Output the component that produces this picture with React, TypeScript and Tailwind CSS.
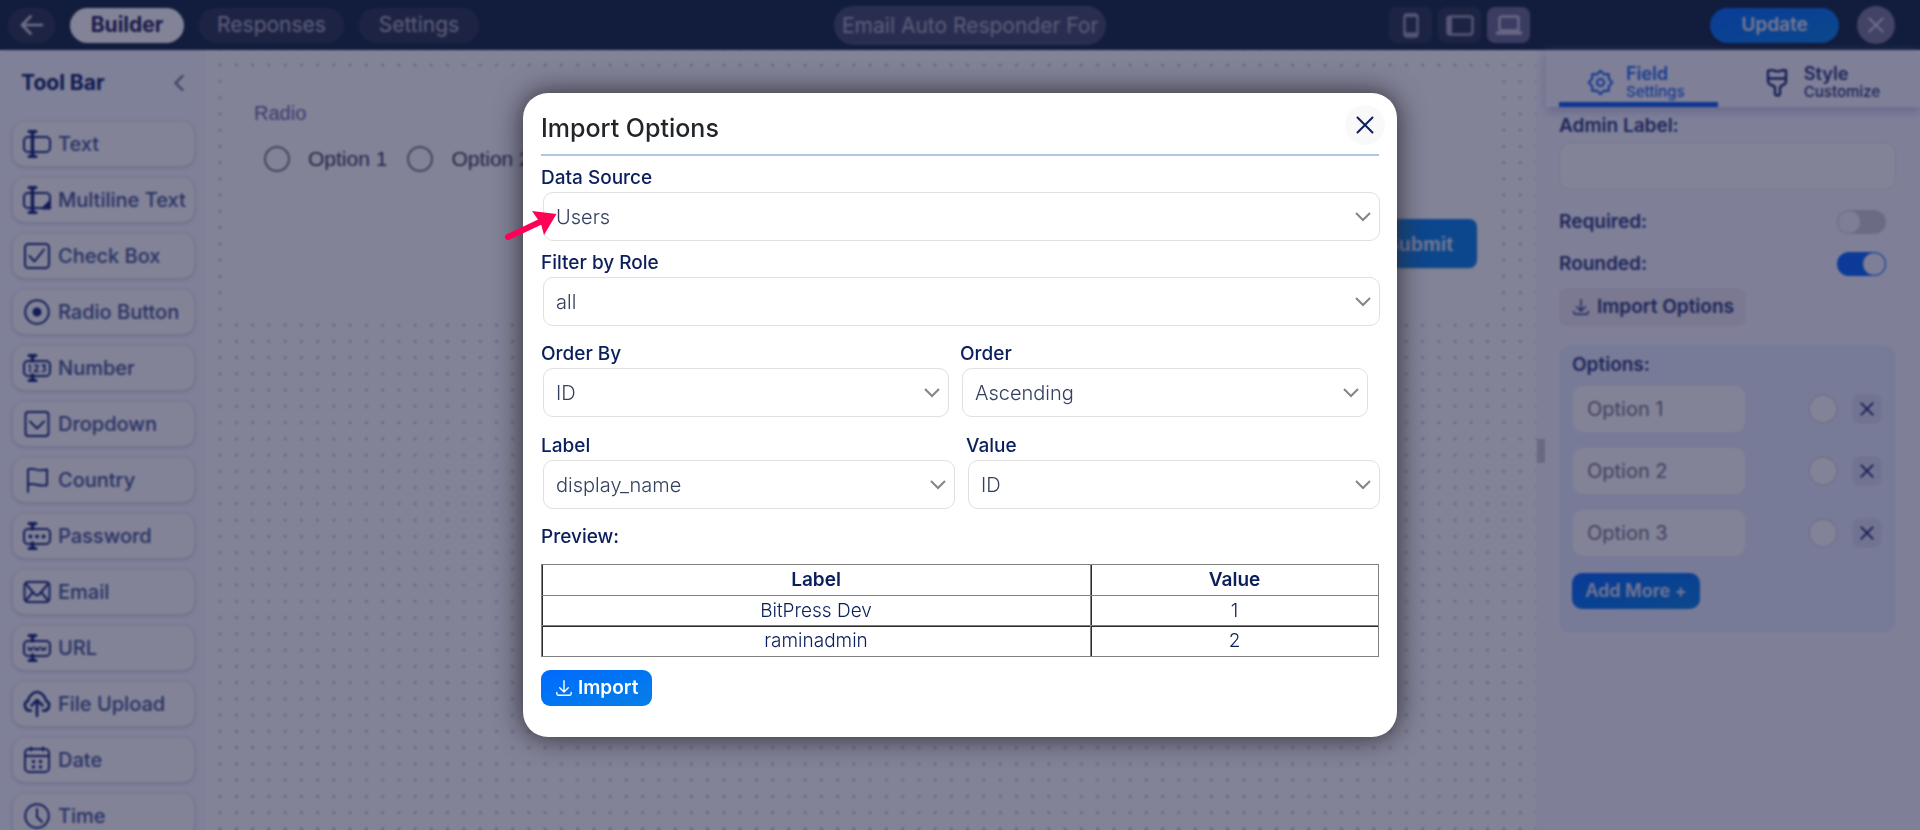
import React from "react";

type IconName =
  | "text"
  | "multiline"
  | "check"
  | "radio"
  | "number"
  | "dropdown"
  | "country"
  | "password"
  | "email"
  | "url"
  | "upload"
  | "date"
  | "time";

const tools: { icon: IconName; label: string }[] = [
  { icon: "text", label: "Text" },
  { icon: "multiline", label: "Multiline Text" },
  { icon: "check", label: "Check Box" },
  { icon: "radio", label: "Radio Button" },
  { icon: "number", label: "Number" },
  { icon: "dropdown", label: "Dropdown" },
  { icon: "country", label: "Country" },
  { icon: "password", label: "Password" },
  { icon: "email", label: "Email" },
  { icon: "url", label: "URL" },
  { icon: "upload", label: "File Upload" },
  { icon: "date", label: "Date" },
  { icon: "time", label: "Time" },
];

function Cursor({ split = false }: { split?: boolean }) {
  return (
    <g strokeWidth="3">
      <path d="M6 1.5h7M6 26.500h7" />
      <path d={split ? "M9.500 2v5M9.500 21v5" : "M9.500 2v24"} strokeWidth="3.500" />
    </g>
  );
}

function ToolIcon({ name }: { name: IconName }) {
  const field = <rect x="1" y="7" width="26" height="15" rx="4" />;
  return (
    <svg
      viewBox="0 0 28 28"
      className="size-7 shrink-0 text-[#1c317a]"
      fill="none"
      stroke="currentColor"
      strokeWidth="2"
      strokeLinecap="round"
      strokeLinejoin="round"
      aria-hidden="true"
    >
      {name === "text" && (
        <>
          {field}
          <Cursor />
        </>
      )}
      {name === "multiline" && (
        <>
          {field}
          <Cursor />
          <path d="M27 15v7.500h-7.500z" fill="currentColor" />
        </>
      )}
      {name === "check" && (
        <>
          <rect x="2" y="2" width="24" height="24" rx="3.500" />
          <path d="M6.500 14l5 5.500 9.500-12" />
        </>
      )}
      {name === "radio" && (
        <>
          <circle cx="14" cy="14" r="11.800" />
          <circle cx="14" cy="14" r="4.500" fill="currentColor" stroke="none" />
        </>
      )}
      {name === "number" && (
        <>
          {field}
          <Cursor split />
          <path d="M6 11.500l1-.500v7M11.500 12c.5-1.500 4-1.500 3.500.5-.3 1.500-2.500 3-3.500 5h4M19 11h3.500l-2 2.500c3 .5 2.500 4.500-1.500 4" strokeWidth="1.500" />
        </>
      )}
      {name === "dropdown" && (
        <>
          <rect x="2.500" y="2" width="23" height="24" rx="3" />
          <path d="M7 11.500l7 7 7-7" />
        </>
      )}
      {name === "country" && <path d="M5 26V3.500c5-3 9 3 19 0v15.500c-8 2.500-12-3-19-.5" />}
      {name === "password" && (
        <>
          {field}
          <Cursor split />
          <g fill="currentColor" stroke="none">
            <circle cx="7.500" cy="14.500" r="2" />
            <circle cx="14" cy="14.500" r="2" />
            <circle cx="20.500" cy="14.500" r="2" />
          </g>
        </>
      )}
      {name === "email" && (
        <>
          <rect x="1.500" y="4" width="25" height="20" rx="3.500" />
          <path d="M3 6l8.500 10c1.500 1.700 3.500 1.700 5 0L25 6M3 22.500l6.500-8M25 22.500l-6.500-8" />
        </>
      )}
      {name === "url" && (
        <>
          {field}
          <Cursor split />
          <path d="M5 13l1.200 3.500L7.500 14l1.200 2.500L10 13M11.500 13l1.200 3.500L14 14l1.200 2.500 1.200-3.500M18 13l1.200 3.500 1.300-2.500 1.200 2.500L23 13" strokeWidth="1.300" />
        </>
      )}
      {name === "upload" && (
        <>
          <path d="M8 20.500C2 21.500-.5 13.500 5 10.500 6 6 10 2 14 2s8 4 9 8.500c5.500 3 3 11-3 10" strokeWidth="2.600" />
          <path d="M14 26V11M8.500 15.500L14 10l5.500 5.500" strokeWidth="2.600" />
        </>
      )}
      {name === "date" && (
        <>
          <rect x="2" y="3" width="24" height="23" rx="4" />
          <path d="M2 10h24M8 1.500v3M20 1.500v3" />
          <g fill="currentColor" stroke="none">
            <circle cx="10.500" cy="15.500" r="1.800" />
            <circle cx="17.500" cy="15.500" r="1.800" />
            <circle cx="10.500" cy="21" r="1.800" />
            <circle cx="17.500" cy="21" r="1.800" />
          </g>
        </>
      )}
      {name === "time" && (
        <>
          <circle cx="14" cy="14" r="11.800" />
          <path d="M14 7v8l5 5" />
        </>
      )}
    </svg>
  );
}

function Cross({ className }: { className: string }) {
  return (
    <svg viewBox="0 0 18 18" className={className} fill="none" stroke="currentColor" strokeWidth="2" strokeLinecap="round" aria-hidden="true">
      <path d="M1.500 1.500l15 15M16.500 1.500l-15 15" />
    </svg>
  );
}

function DownloadIcon() {
  return (
    <svg viewBox="0 0 16 16" className="size-4 shrink-0" fill="none" stroke="currentColor" strokeWidth="1.400" strokeLinecap="round" strokeLinejoin="round" aria-hidden="true">
      <path d="M8 .7v11M3.700 7.700L8 12l4.300-4.300M.8 12.500v1c0 1 .7 1.700 1.700 1.700h11c1 0 1.700-.7 1.700-1.700v-1" />
    </svg>
  );
}

function TopBar() {
  return (
    <header className="flex h-[50px] shrink-0 items-center bg-[#1d3149] pr-[25px] pl-2 text-[21px]">
      <div className="flex flex-1 items-center gap-[15px]">
        <button aria-label="Back" className="flex h-[35px] w-[47px] items-center justify-center rounded-full bg-[#334155] text-[#d5d5dc]">
          <svg viewBox="0 0 24 20" className="h-5 w-6" fill="none" stroke="currentColor" strokeWidth="2.600" strokeLinecap="round" strokeLinejoin="round" aria-hidden="true">
            <path d="M22 10H2M10.500 1.500L2 10l8.500 8.500" />
          </svg>
        </button>
        <button className="h-[35px] w-[114px] rounded-full bg-white font-bold text-[#2c2c60]">Builder</button>
        <button className="h-[35px] w-[145px] rounded-full bg-[#334155] text-[#b4b4c6]">Responses</button>
        <button className="h-[35px] w-[120px] rounded-full bg-[#334155] text-[#b4b4c6]">Settings</button>
      </div>
      <input
        aria-label="Form name"
        defaultValue="Email Auto Responder Form"
        className="h-[39px] w-[272px] rounded-full bg-[#4b5570] px-2 text-[#b0b0c0]"
      />
      <div className="flex w-[789px] items-center justify-end">
        <div className="mr-[180px] flex gap-[6px]">
          <button aria-label="Mobile" className="flex h-9 w-[43px] items-center justify-center rounded-lg bg-[#334155] text-[#a5a5bd]">
            <svg viewBox="0 0 16 25" className="h-[25px] w-4" fill="none" stroke="currentColor" strokeWidth="2.400" aria-hidden="true">
              <rect x="1.500" y="1.500" width="13" height="22" rx="2.500" />
              <path d="M2 2.500h12M2 21h12" strokeWidth="3" />
            </svg>
          </button>
          <button aria-label="Tablet" className="flex h-9 w-[43px] items-center justify-center rounded-lg bg-[#334155] text-[#a5a5bd]">
            <svg viewBox="0 0 28 21" className="h-[21px] w-7" fill="none" stroke="currentColor" strokeWidth="2.400" aria-hidden="true">
              <rect x="1.500" y="1.500" width="25" height="18" rx="2.500" />
              <path d="M4 2v17" strokeWidth="4" />
            </svg>
          </button>
          <button aria-label="Desktop" className="flex h-9 w-[43px] items-center justify-center rounded-lg bg-[#6f7092] text-[#c9c9da]">
            <svg viewBox="0 0 26 20" className="h-5 w-[26px]" fill="none" stroke="currentColor" strokeWidth="2.400" aria-hidden="true">
              <rect x="3.500" y="1.500" width="19" height="14" rx="2" />
              <path d="M0 18h26" strokeWidth="3.400" />
            </svg>
          </button>
        </div>
        <button className="mr-[18px] h-[35px] w-[129px] rounded-full bg-linear-to-br from-[#0f71ff] to-[#1288e4] text-[19px] font-semibold text-[#e2e6f4] shadow-md">
          Update
        </button>
        <button aria-label="Close" className="flex size-[38px] items-center justify-center rounded-full bg-[#7e7f9a] text-[#dedee8]">
          <Cross className="size-4" />
        </button>
      </div>
    </header>
  );
}

function ToolBar() {
  return (
    <aside className="w-[206px] shrink-0 overflow-hidden bg-[#f7faff]">
      <div className="flex h-[66px] items-center justify-between pr-[22px] pl-[21px] text-[#152a6c]">
        <h2 className="text-[21px] font-bold">Tool Bar</h2>
        <button aria-label="Collapse tool bar" className="text-[#6b7494]">
          <svg viewBox="0 0 10 16" className="h-4 w-[10px]" fill="none" stroke="currentColor" strokeWidth="2.200" strokeLinecap="round" aria-hidden="true">
            <path d="M8.500 1L1.500 8l7 7" />
          </svg>
        </button>
      </div>
      <ul className="flex flex-col gap-3 pt-[6px] pr-3 pl-[13px]">
        {tools.map((tool) => (
          <li key={tool.label}>
            <button className="flex h-11 w-full items-center gap-[7px] rounded-xl bg-white pl-[10px] text-xl font-medium whitespace-nowrap text-[#495b94] shadow-[0_1px_4px_#c0c0d0]">
              <ToolIcon name={tool.icon} />
              {tool.label}
            </button>
          </li>
        ))}
      </ul>
    </aside>
  );
}

function Canvas() {
  return (
    <main className="min-w-0 flex-1 bg-white bg-[radial-gradient(circle_at_center,#c2c2cc_1px,transparent_2px)] bg-[size:calc(65px/4)_calc(65px/4)] bg-position-[6px_7px] pt-[23px] pr-[35px] pl-[22px] font-['Liberation_Sans',sans-serif]">
      <form className="h-[246px] bg-white pt-[26px] pl-[26px]" onSubmit={(e) => e.preventDefault()}>
        <fieldset>
          <legend className="text-xl text-[#6d70a8]">Radio</legend>
          <div className="mt-[18px] flex gap-5 pl-[10px]">
            {["Option 1", "Option 2"].map((label) => (
              <label key={label} className="flex items-center gap-[18px] text-[21px] leading-7 text-[#42435c]">
                <input type="radio" name="radio" className="size-[26px] appearance-none rounded-full border-2 border-[#7b7c90]" />
                {label}
              </label>
            ))}
          </div>
        </fieldset>
        <div className="mt-[46px] flex justify-end pr-6">
          <button className="h-[49px] rounded-lg bg-[#1187e8] px-6 text-xl font-bold text-[#dfe6f2] shadow-sm">Submit</button>
        </div>
      </form>
    </main>
  );
}

function Switch({ label, on }: { label: string; on?: boolean }) {
  return (
    <label className="flex h-[42px] items-center justify-between pr-[10px]">
      {label}
      <input
        type="checkbox"
        role="switch"
        defaultChecked={on}
        className="h-6 w-[49px] appearance-none rounded-full bg-[#cfcfda] before:block before:size-6 before:rounded-full before:border before:border-[#cfcfda] before:bg-[#f4f4fa] checked:bg-[#0f6cff] checked:before:ml-[25px] checked:before:border-[#0f6cff]"
      />
    </label>
  );
}

function SettingsPanel() {
  return (
    <aside className="flex w-[384px] shrink-0 bg-[#f6f8ff] text-[#33437f]">
      <div className="flex w-[10px] shrink-0 items-center pt-[22px]">
        <div className="ml-px h-6 w-2 bg-[#cacad6]" />
      </div>
      <div className="min-w-0 flex-1">
        <div className="flex h-[57px] justify-between pr-6 pl-[13px] shadow-[0_5px_10px_#c9c9e4]" role="tablist">
          <button role="tab" aria-selected="true" className="flex w-[159px] items-center gap-3 border-b-[5px] border-[#1467f2] pt-3 pl-7 text-left text-[#2c72f0]">
            <svg viewBox="0 0 24 24" className="size-[27px]" fill="none" stroke="currentColor" strokeWidth="2" strokeLinejoin="round" aria-hidden="true">
              <path d="M12 1.500l3 3.200 4.300-.2.200 4.300 3 3.200-3 3.200-.2 4.300-4.300-.2-3 3.200-3-3.200-4.300.2-.2-4.300-3-3.200 3-3.200.2-4.300 4.300.2z" />
              <circle cx="12" cy="12" r="3.200" />
            </svg>
            <span className="flex flex-col">
              <span className="text-lg leading-5 font-semibold">Field</span>
              <span className="text-[15px] leading-4 font-medium">Settings</span>
            </span>
          </button>
          <button role="tab" aria-selected="false" className="flex items-center gap-4 border-b-[5px] border-transparent pt-3 pr-4 text-left">
            <svg viewBox="0 0 22 29" className="h-[29px] w-[22px] text-[#24336f]" fill="none" stroke="currentColor" strokeWidth="2.400" strokeLinejoin="round" aria-hidden="true">
              <path d="M2 3c4-3 8 2 12 0 2-1 4-1 6-.5V13c0 3-2 4-5 5l-1 1.500V25c0 3.500-5 3.500-5 0v-5.500L8 18c-4-1-6-2-6-5zM2 10.500h18" />
            </svg>
            <span className="flex flex-col">
              <span className="text-lg leading-5 font-semibold">Style</span>
              <span className="text-[15px] leading-4 font-medium">Customize</span>
            </span>
          </button>
        </div>
        <div className="pr-6 pl-[13px] text-[19px] leading-6 font-semibold">
          <label className="flex flex-col gap-1 pt-[7px]">
            Admin Label:
            <input className="h-12 rounded-xl border border-[#e2e2ee] bg-white px-3" />
          </label>
          <div className="pt-[11px]">
            <Switch label="Required:" />
            <Switch label="Rounded:" on />
          </div>
          <button className="mt-[3px] flex h-[38px] w-[187px] items-center gap-2 rounded-lg bg-[#eceaf0] pl-[14px] whitespace-nowrap">
            <DownloadIcon />
            Import Options
          </button>
          <section className="mt-[19px] h-[288px] rounded-xl bg-[#e9efff] pt-2 pr-[14px] pl-[13px]">
            <h3>Options:</h3>
            <div className="mt-2 flex flex-col gap-[14px]">
              {[1, 2, 3].map((n) => (
                <div key={n} className="flex h-12 items-center">
                  <input
                    aria-label={`Option ${n} label`}
                    defaultValue={`Option ${n}`}
                    className="h-12 w-[174px] rounded-xl border border-[#eeeef4] bg-white px-[14px] text-xl font-normal text-[#7a7a8e]"
                  />
                  <input
                    type="radio"
                    name="default-option"
                    aria-label={`Select option ${n} by default`}
                    className="ml-auto size-[30px] appearance-none rounded-full border-2 border-[#dcdce6] bg-white"
                  />
                  <button aria-label={`Remove option ${n}`} className="ml-[14px] flex size-[30px] items-center justify-center rounded-lg bg-[#dbe0f0] text-[#17296c]">
                    <Cross className="size-[14px]" />
                  </button>
                </div>
              ))}
            </div>
            <button className="mt-4 h-9 w-32 rounded-[10px] bg-linear-to-br from-[#0f6cff] to-[#1288e4] text-lg text-[#dfe3f2]">Add More +</button>
          </section>
        </div>
      </div>
    </aside>
  );
}

function SelectField({ label, value, options = [] }: { label: string; value: string; options?: string[] }) {
  return (
    <label className="flex flex-1 flex-col gap-[2px] text-[19px] leading-6 font-medium text-[#0a1f5c]">
      {label}
      <span className="relative -mr-px ml-[2px] block">
        <select
          defaultValue={value}
          className="h-[49px] w-full appearance-none rounded-[10px] border border-[#e0e0e0] bg-white px-3 text-xl font-light text-[#33415f]"
        >
          {[value, ...options].map((o) => (
            <option key={o}>{o}</option>
          ))}
        </select>
        <svg viewBox="0 0 16 10" className="pointer-events-none absolute top-5 right-[9px] h-[10px] w-4 text-[#858585]" fill="none" stroke="currentColor" strokeWidth="2" aria-hidden="true">
          <path d="M1 1l7 7 7-7" />
        </svg>
      </span>
    </label>
  );
}

function ImportDialog() {
  const cell = "border border-[#808080] p-0";
  const left = "shadow-[inset_1px_0_0_#2c2c2c]";
  const leftTop = "shadow-[inset_1px_1px_0_#2c2c2c]";
  return (
    <div role="dialog" aria-modal="true" aria-labelledby="import-title" className="relative w-[874px] max-w-full rounded-[25px] bg-white px-[18px] pt-[14px] pb-[31px] shadow-[0_0_28px_#2a2a34]">
      <div className="flex h-[49px] items-start justify-between border-b-2 border-[#b0c8e6]">
        <h1 id="import-title" className="pt-[7px] text-[25px] leading-7 font-medium text-[#212529]">
          Import Options
        </h1>
        <button aria-label="Close dialog" className="-mt-[2px] -mr-[6px] flex size-10 items-center justify-center rounded-full bg-[#f9f9f9] text-[#0a1f5c]">
          <Cross className="size-[18px]" />
        </button>
      </div>
      <div className="flex pt-[10px]">
        <SelectField label="Data Source" value="Users" options={["Posts", "Terms"]} />
      </div>
      <div className="flex pt-[10px]">
        <SelectField label="Filter by Role" value="all" options={["administrator", "subscriber"]} />
      </div>
      <div className="flex gap-3 pt-4 pr-3">
        <SelectField label="Order By" value="ID" options={["display_name"]} />
        <SelectField label="Order" value="Ascending" options={["Descending"]} />
      </div>
      <div className="flex gap-3 pt-[17px]">
        <SelectField label="Label" value="display_name" options={["ID"]} />
        <SelectField label="Value" value="ID" options={["display_name"]} />
      </div>
      <h2 className="pt-4 text-[19px] leading-6 font-medium text-[#0a1f5c]">Preview:</h2>
      <table className="mt-[15px] w-full border-collapse text-center text-[19px] leading-[30px] text-[#0a1f5c]">
        <thead>
          <tr>
            <th className={`${cell} ${left} w-[549px] font-semibold`}>Label</th>
            <th className={`${cell} ${left} font-semibold`}>Value</th>
          </tr>
        </thead>
        <tbody className="font-light">
          <tr className="leading-[29px]">
            <td className={`${cell} ${left}`}>BitPress Dev</td>
            <td className={`${cell} ${left}`}>1</td>
          </tr>
          <tr>
            <td className={`${cell} ${leftTop}`}>raminadmin</td>
            <td className={`${cell} ${leftTop}`}>2</td>
          </tr>
        </tbody>
      </table>
      <button className="mt-[13px] flex h-9 w-[111px] items-center gap-[6px] rounded-[9px] bg-linear-to-br from-[#006aff] to-[#0a7fe6] pl-[15px] text-[19px] font-semibold text-white">
        <DownloadIcon />
        Import
      </button>
      <svg viewBox="0 0 54 32" className="pointer-events-none absolute top-[115px] -left-5 h-8 w-[54px] text-[#ff0054]" aria-hidden="true">
        <path d="M5 29L38 13.500" fill="none" stroke="currentColor" strokeWidth="6" strokeLinecap="round" />
        <path d="M29 3l24.500 3L41 27l-3-11z" fill="currentColor" />
      </svg>
    </div>
  );
}

export default function App() {
  return (
    <div className="h-screen overflow-hidden font-['Inter',sans-serif]">
      <div className="flex h-full flex-col">
        <TopBar />
        <div className="flex min-h-0 flex-1">
          <ToolBar />
          <Canvas />
          <SettingsPanel />
        </div>
      </div>
      <div className="fixed inset-0 flex items-center justify-center bg-[#070731]/50 backdrop-blur-[1px]">
        <ImportDialog />
      </div>
    </div>
  );
}
